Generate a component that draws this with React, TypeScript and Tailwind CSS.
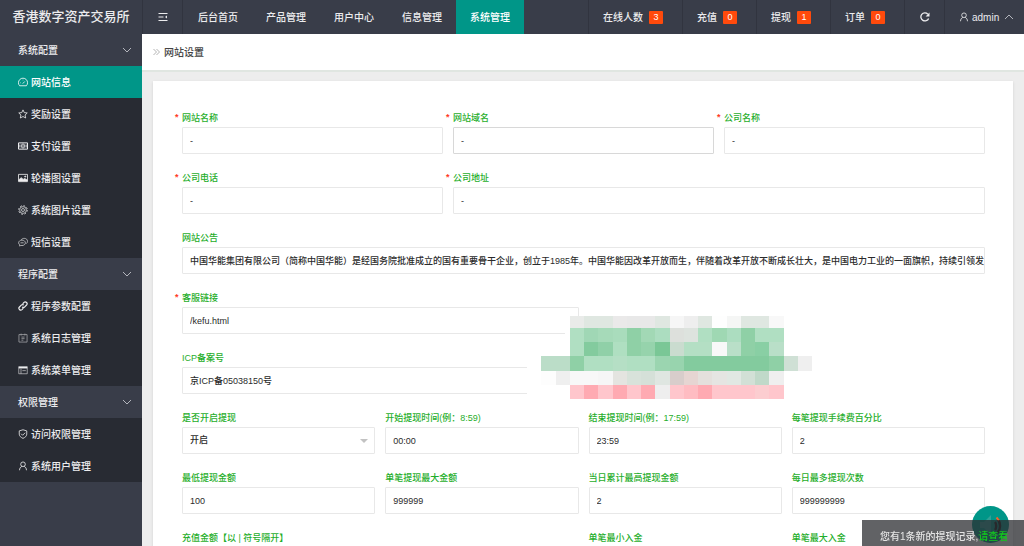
import type { ReactNode } from "react";
import { clsx } from "clsx";

type IconName =
  | "gauge"
  | "star"
  | "money"
  | "picture"
  | "gear"
  | "chat"
  | "link"
  | "log"
  | "template"
  | "shield"
  | "user";

const icons: Record<IconName, ReactNode> = {
  gauge: (
    <>
      <path d="M2.6 14A7.200 7.200 0 0 1 .7 9.200a7.300 7.300 0 0 1 14.600 0A7.200 7.200 0 0 1 13.400 14z" />
      <path d="m7.600 10.600 3.200-3.400M3.200 9.200h.9M8 4.400v.8" />
    </>
  ),
  star: <path d="m8 1.400 2 4.400 4.800.5-3.500 3.300 1 4.800L8 12l-4.300 2.400 1-4.800L1.200 6.300l4.800-.5z" />,
  money: (
    <>
      <rect x="0.8" y="3" width="14.4" height="10" strokeWidth="1.6" />
      <ellipse cx="8" cy="8" rx="2.8" ry="3.2" />
      <path d="M8 6.2v3.6M3 5.6v4.8M13 5.6v4.8" strokeWidth="1.4" />
    </>
  ),
  picture: (
    <>
      <rect x="0.8" y="2.2" width="14.4" height="11.6" />
      <path d="M1.5 12.8v-2l3.600-3.400 3.200 2.800 2.400-1.600 3.800 2.600v1.600z" fill="currentColor" />
      <circle cx="11.6" cy="5.6" r="0.9" fill="currentColor" />
    </>
  ),
  gear: (
    <g opacity="0.85">
      <circle cx="8" cy="8" r="5.4" />
      <circle cx="8" cy="8" r="2.4" />
      <circle cx="8" cy="8" r="6.9" strokeDasharray="2.7 2.72" strokeWidth="1.6" />
    </g>
  ),
  chat: (
    <g opacity="0.8">
      <path d="M5 4.600C6.400 2.800 8.200 2.200 10 2.200c3 0 5.200 1.900 5.200 4.600 0 1.800-.8 3-2.200 3.900" />
      <path d="M6.400 5C3.400 5 1 6.900 1 9.300c0 1.400.7 2.500 1.800 3.300l-.3 1.900 2.100-1c.6.100 1.200.2 1.800.2 3 0 5.400-1.900 5.400-4.400S9.400 5 6.400 5z" />
      <path d="M4 9.300h5" />
    </g>
  ),
  link: (
    <g strokeWidth="1.9">
      <path d="m7.400 4.600 2.200-2.300a2.900 2.900 0 0 1 4.100 4.100l-2.900 2.900a2.900 2.900 0 0 1-4.100 0" />
      <path d="m8.600 11.400-2.200 2.300a2.900 2.900 0 0 1-4.100-4.100l2.900-2.900a2.900 2.900 0 0 1 4.100 0" />
    </g>
  ),
  log: (
    <g opacity="0.6">
      <rect x="1.5" y="2.5" width="13" height="12" />
      <path d="M5 1v3M11 1v3M5.500 6.500h5M5.500 9h5M5.500 11.500h3" />
    </g>
  ),
  template: (
    <>
      <rect x="1.2" y="2.5" width="13.6" height="11.5" opacity="0.7" />
      <path d="M1.200 4.200h13.600" strokeWidth="2.600" />
      <path d="M4.800 6v8M7 9h5.500" opacity="0.7" />
    </>
  ),
  shield: (
    <>
      <path d="M8 1.200 2 3v5.200c0 3 2.400 5.200 6 6.800 3.600-1.600 6-3.800 6-6.800V3z" />
      <path d="m5 7.600 2.400 2.400 4-4" />
    </>
  ),
  user: (
    <>
      <circle cx="8" cy="5.2" r="3.7" />
      <path d="M6.200 8.600C3.800 9.600 2.600 11.800 2.400 14.800M9.800 8.600c2.400 1 3.600 3.200 3.800 6.200" />
    </>
  ),
};

function Icon({ name }: { name: IconName }) {
  return (
    <svg
      viewBox="0 0 16 16"
      className="h-[10px] w-[10px] shrink-0"
      fill="none"
      stroke="currentColor"
      strokeWidth="1.3"
      strokeLinejoin="round"
    >
      {icons[name]}
    </svg>
  );
}

function Chevron({ up = false }: { up?: boolean }) {
  return (
    <svg
      viewBox="0 0 10 6"
      className={clsx("h-[6px] w-[10px] shrink-0", up && "rotate-180")}
      fill="none"
      stroke="#b4b6bd"
      strokeWidth="1"
    >
      <path d="m1 1 4 4 4-4" />
    </svg>
  );
}

const topNav = ["后台首页", "产品管理", "用户中心", "信息管理", "系统管理"];

const counters = [
  { label: "在线人数", count: 3 },
  { label: "充值", count: 0 },
  { label: "提现", count: 1 },
  { label: "订单", count: 0 },
];

const menu: { title: string; items: { label: string; icon: IconName }[] }[] = [
  {
    title: "系统配置",
    items: [
      { label: "网站信息", icon: "gauge" },
      { label: "奖励设置", icon: "star" },
      { label: "支付设置", icon: "money" },
      { label: "轮播图设置", icon: "picture" },
      { label: "系统图片设置", icon: "gear" },
      { label: "短信设置", icon: "chat" },
    ],
  },
  {
    title: "程序配置",
    items: [
      { label: "程序参数配置", icon: "link" },
      { label: "系统日志管理", icon: "log" },
      { label: "系统菜单管理", icon: "template" },
    ],
  },
  {
    title: "权限管理",
    items: [
      { label: "访问权限管理", icon: "shield" },
      { label: "系统用户管理", icon: "user" },
    ],
  },
];

const notice =
  "中国华能集团有限公司（简称中国华能）是经国务院批准成立的国有重要骨干企业，创立于1985年。中国华能因改革开放而生，伴随着改革开放不断成长壮大，是中国电力工业的一面旗帜，持续引领发电行业进步";

type FieldProps = {
  id: string;
  label: string;
  value: string;
  span: string;
  required?: boolean;
  focused?: boolean;
  options?: string[];
};

const fields: FieldProps[] = [
  { id: "site-name", label: "网站名称", value: "-", span: "col-span-4", required: true },
  { id: "site-domain", label: "网站域名", value: "-", span: "col-span-4", required: true, focused: true },
  { id: "company", label: "公司名称", value: "-", span: "col-span-4", required: true },
  { id: "phone", label: "公司电话", value: "-", span: "col-span-4", required: true },
  { id: "address", label: "公司地址", value: "-", span: "col-span-8", required: true },
  { id: "notice", label: "网站公告", value: notice, span: "col-span-12" },
  { id: "kefu", label: "客服链接", value: "/kefu.html", span: "col-span-6", required: true },
  { id: "icp", label: "ICP备案号", value: "京ICP备05038150号", span: "col-span-6 col-start-1" },
  { id: "withdraw-on", label: "是否开启提现", value: "开启", span: "col-span-3 col-start-1", options: ["开启", "关闭"] },
  { id: "withdraw-from", label: "开始提现时间(例：8:59)", value: "00:00", span: "col-span-3" },
  { id: "withdraw-to", label: "结束提现时间(例：17:59)", value: "23:59", span: "col-span-3" },
  { id: "withdraw-fee", label: "每笔提现手续费百分比", value: "2", span: "col-span-3" },
  { id: "withdraw-min", label: "最低提现金额", value: "100", span: "col-span-3" },
  { id: "withdraw-max", label: "单笔提现最大金额", value: "999999", span: "col-span-3" },
  { id: "withdraw-day", label: "当日累计最高提现金额", value: "2", span: "col-span-3" },
  { id: "withdraw-times", label: "每日最多提现次数", value: "999999999", span: "col-span-3" },
  { id: "recharge", label: "充值金额【以 | 符号隔开】", value: "", span: "col-span-6" },
  { id: "deposit-min", label: "单笔最小入金", value: "", span: "col-span-3" },
  { id: "deposit-max", label: "单笔最大入金", value: "", span: "col-span-3" },
];

function Field({ id, label, value, span, required, focused, options }: FieldProps) {
  const control = clsx(
    "block h-[27px] w-full appearance-none rounded-[1px] border bg-white pl-[7px] text-[9px] font-medium text-[#2b2b2b] outline-none",
    focused ? "border-[#d8d8d8]" : "border-[#e8e8e8]"
  );
  return (
    <div className={clsx("min-w-0", span)}>
      <label htmlFor={id} className="relative mb-px block text-[9px] leading-4 font-medium text-[#1fae2b]">
        {required && <span className="absolute -left-[7px] -top-px font-bold text-[#ff3b1f]">*</span>}
        {label}
      </label>
      {options ? (
        <div className="relative">
          <select id={id} defaultValue={value} className={control}>
            {options.map((o) => (
              <option key={o}>{o}</option>
            ))}
          </select>
          <svg viewBox="0 0 8 4" className="pointer-events-none absolute right-[7px] top-[12px] h-1 w-2" fill="#c2c2c2">
            <path d="M0 0h8L4 4z" />
          </svg>
        </div>
      ) : (
        <input id={id} type="text" defaultValue={value} className={control} />
      )}
    </div>
  );
}

// Each row starts at the given column of the mosaic
const mosaic = [
  {
    y: 0,
    h: 12,
    start: 3,
    colors: "e9ebe9 dfe7e1 dfe7e1 eae9e9 e8e8e8 e8e8e8 dfe7e1 f6f6f6 eeeeee dfe7e1 fefefe f5f6f5 dfe7e1 dfe7e1 f8f8f8",
  },
  {
    y: 12,
    h: 14,
    start: 3,
    colors: "b0dfc2 a0d7b5 a6dab9 a9dcbc 8fd0a6 a2d8b5 acddc0 dde0dc dde3de b0dfc2 9fd8b3 acddc0 8fd0a6 b0dfc2 b0dfc2",
  },
  {
    y: 26,
    h: 14,
    start: 3,
    colors: "b0dfc2 83cb9e 90d0a8 afdfc1 8fd0a6 96d3ac 7ac796 cadccf b4dfc4 b4dfc4 f8f8f8 b9dfc8 8fd0a6 89cfa4 b9dfc8",
  },
  {
    y: 40,
    h: 15,
    start: 1,
    colors:
      "bbddc8 bbddc8 8fd0a6 b0dfc2 b0dfc2 b5dfc5 b0dfc2 b0dfc2 9bd5b0 98d4ae 83cb9e 83cb9e 83cb9e 83cb9e 83cb9e 83cb9e 8fd0a6 cfe0d5 efefef",
  },
  {
    y: 55,
    h: 14,
    start: 1,
    colors:
      "fdfdfd efefef f8f8f8 f8f8f8 f6f6f6 e4e4e0 d8e2da d5e0d8 dfe6e1 d8cdcb e6d5d2 e4e0dc e5e5e2 e1e8e3 d2e0d6 c0d9c9 efefef",
  },
  {
    y: 69,
    h: 14,
    start: 3,
    colors: "ffc6cc ffaab2 ffc6cc ffaab2 ffc6cc ffaab2 eeeeee ffc6cc ffbcc2 ffaab2 ffc6cc ffc6cc ffc6cc fccdd0 ffc6cc",
  },
];

function Mosaic() {
  const cell = 14.25;
  return (
    <svg
      viewBox="0 0 285 84"
      className="pointer-events-none absolute left-[374px] top-[235px] h-[84px] w-[285px]"
      shapeRendering="crispEdges"
    >
      <path d="M38 0h30v84H0V48h38z" fill="#fff" />
      {mosaic.map((row) =>
        row.colors.split(" ").map((color, i) => (
          <rect
            key={`${row.y}-${i}`}
            x={(row.start + i) * cell}
            y={row.y}
            width={cell}
            height={row.h}
            fill={`#${color}`}
          />
        ))
      )}
    </svg>
  );
}

function Header() {
  return (
    <header className="flex h-[34px] shrink-0 items-stretch bg-[#393d49] text-[10px] font-medium text-[#ececee]">
      <h1 className="flex w-[142px] shrink-0 items-center justify-center text-[13px]">香港数字资产交易所</h1>
      <button type="button" aria-label="收起菜单" className="flex w-[41px] items-center justify-center border-x border-[#31343f]">
        <svg viewBox="0 0 10 10" className="h-[10px] w-[10px]" fill="none" stroke="currentColor" strokeWidth="1.2">
          <path d="M.5 1.500h9M.5 5h5M.5 8.500h9" />
          <path d="m9 3.500-2 1.500 2 1.500z" fill="currentColor" stroke="none" />
        </svg>
      </button>
      <nav className="flex pl-px">
        {topNav.map((item) => (
          <a
            key={item}
            href="#"
            className={clsx("flex items-center px-[14px]", item === "系统管理" && "bg-[#009688] text-white")}
          >
            {item}
          </a>
        ))}
      </nav>
      <div className="ml-auto flex">
        {counters.map((c) => (
          <a key={c.label} href="#" className="flex items-center gap-[6px] border-l border-[#31343f] pl-[14px] pr-[19px]">
            {c.label}
            <span className="flex h-[13px] w-[14px] items-center justify-center rounded-[1px] bg-[#ff4a0c] text-[9px] leading-none text-white">
              {c.count}
            </span>
          </a>
        ))}
        <button type="button" aria-label="刷新" className="flex w-10 items-center justify-center border-l border-[#31343f]">
          <svg viewBox="0 0 10 10" className="h-[10px] w-[10px]" fill="none" stroke="currentColor" strokeWidth="1.3">
            <path d="M8.600 6.400A4 4 0 1 1 7.800 2.200" />
            <path d="M9.500.6v3.900H5.600z" fill="currentColor" stroke="none" />
          </svg>
        </button>
        <button type="button" className="flex w-20 items-center gap-[3px] border-l border-[#31343f] pl-[14px]">
          <Icon name="user" />
          <span>admin</span>
          <span className="ml-[2px]">
            <Chevron up />
          </span>
        </button>
      </div>
    </header>
  );
}

function Sidebar() {
  return (
    <aside className="w-[142px] shrink-0 bg-[#393d49] text-[10px] font-medium text-[#ececee]">
      {menu.map((group) => (
        <section key={group.title}>
          <button type="button" className="flex h-8 w-full items-center justify-between pl-[18px] pr-[10px]">
            {group.title}
            <Chevron />
          </button>
          <ul className="bg-[#282b33]">
            {group.items.map((item) => (
              <li key={item.label}>
                <a
                  href="#"
                  className={clsx(
                    "flex h-8 items-center gap-[3px] pl-[18px]",
                    item.label === "网站信息" && "bg-[#009688] text-white"
                  )}
                >
                  <Icon name={item.icon} />
                  {item.label}
                </a>
              </li>
            ))}
          </ul>
        </section>
      ))}
    </aside>
  );
}

export default function App() {
  return (
    <div
      lang="zh-CN"
      className="flex h-screen flex-col overflow-hidden bg-[#ededed] font-['Liberation_Sans','Noto_Sans_CJK_SC',sans-serif]"
    >
      <Header />
      <div className="flex min-h-0 flex-1">
        <Sidebar />
        <main className="min-w-0 flex-1 overflow-y-auto [scrollbar-width:none]">
          <div className="flex h-[38px] items-center gap-1 border-b-2 border-[#e0e6e1] bg-white pl-[11px] text-[10px] font-medium text-[#444]">
            <svg viewBox="0 0 7 8" className="h-2 w-[7px]" fill="none" stroke="#aaa" strokeWidth="0.9">
              <path d="m.5 1 3 3-3 3M3.500 1l3 3-3 3" />
            </svg>
            网站设置
          </div>
          <form className="relative mx-[11px] mt-[9px] grid grid-cols-12 gap-x-[10px] gap-y-4 bg-white pt-[29px] pb-7 pr-7 pl-[29px] shadow-sm">
            {fields.map((f) => (
              <Field key={f.id} {...f} />
            ))}
            <Mosaic />
          </form>
        </main>
      </div>

      {/* Sound toggle */}
      <button
        type="button"
        aria-label="声音提醒"
        className="fixed bottom-[3px] right-[15px] flex h-[37px] w-[37px] items-center justify-center rounded-full bg-[#009688]"
      >
        <svg viewBox="0 0 24 24" className="h-6 w-6" fill="none">
          <path d="M1 9h4l7-7v20l-7-7H1z" fill="#2fa196" />
          <path d="M16 9c1.600 1.800 1.600 6.200 0 8M18.500 6c3.400 3.600 3.400 10.400 0 14" stroke="#1c1c1c" strokeWidth="2.400" />
          <path d="m17.500 4.500 2.500 3" stroke="#f0642d" strokeWidth="2" />
        </svg>
      </button>

      {/* Withdrawal notice */}
      <div className="fixed bottom-0 right-0 flex h-[26px] w-[162px] items-center whitespace-nowrap bg-[#2c2d31]/75 pl-[18px] pt-[7px] text-[10px] font-medium text-[#e4e4e4]">
        您有1条新的提现记录,
        <a href="#" className="text-[#14c81e]">
          请查看
        </a>
      </div>
    </div>
  );
}
